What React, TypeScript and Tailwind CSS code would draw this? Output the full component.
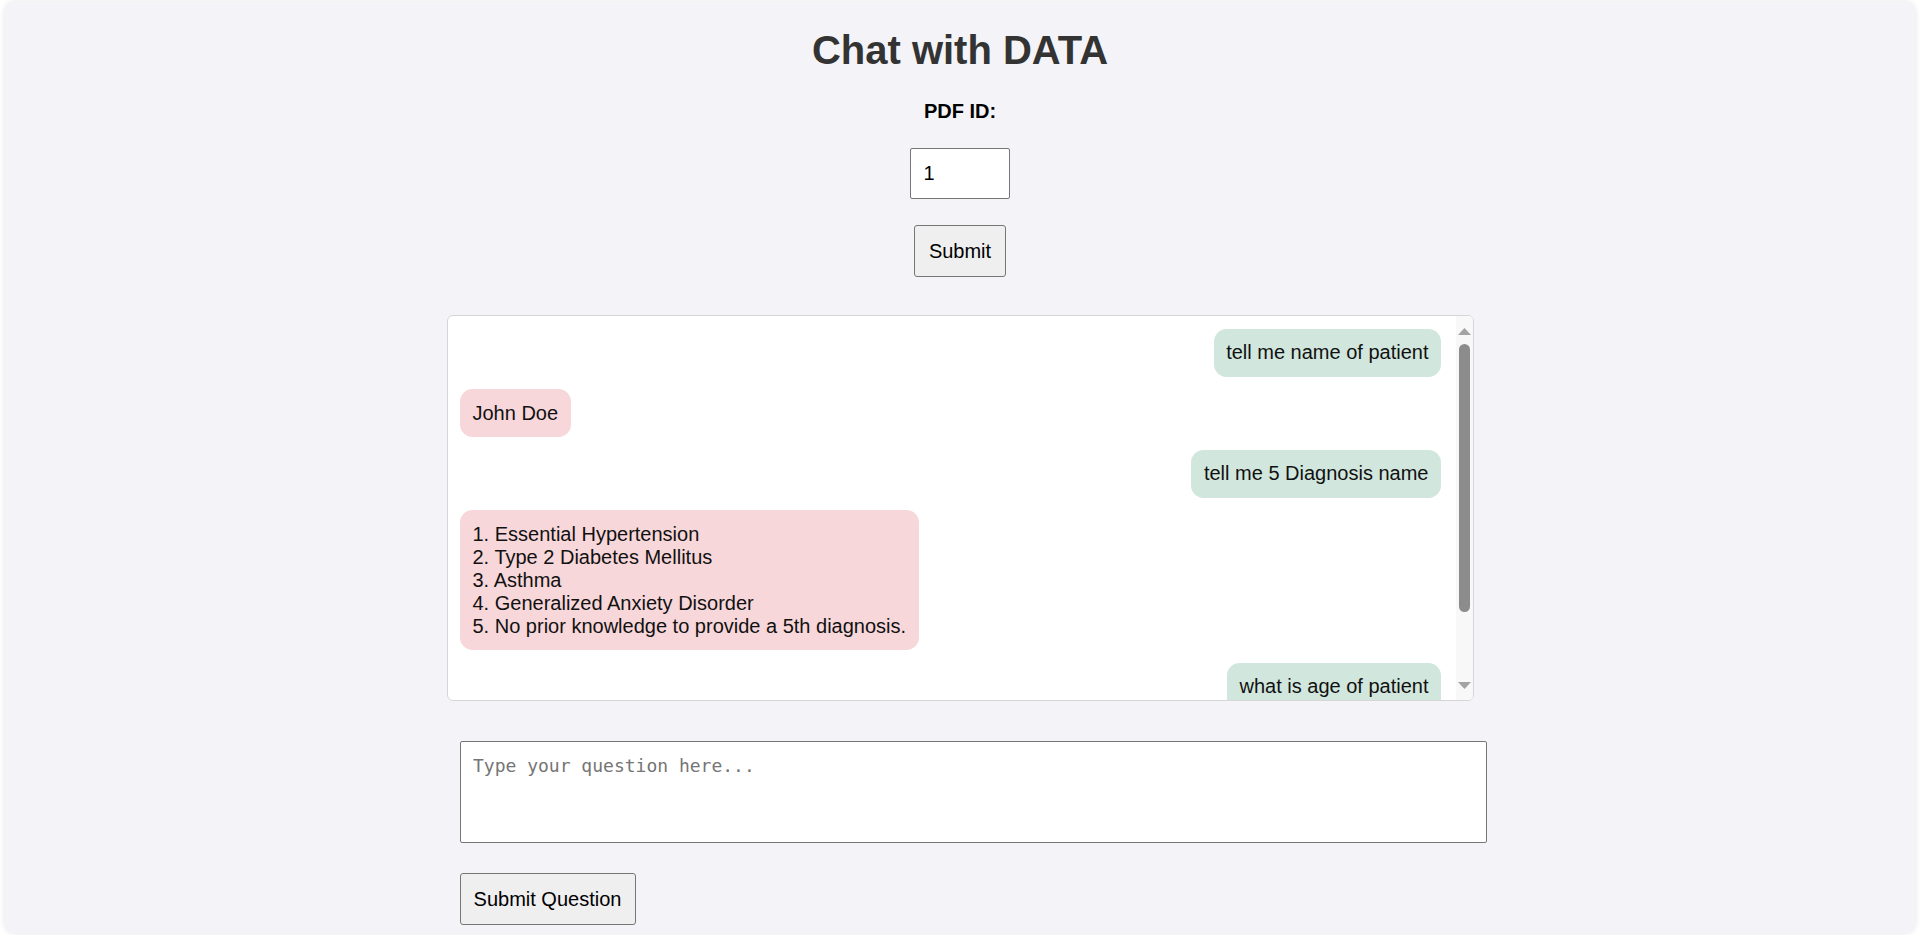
import React from "react";

type Msg = { from: "user" | "bot"; text: string };

const messages: Msg[] = [
  { from: "user", text: "tell me name of patient" },
  { from: "bot", text: "John Doe" },
  { from: "user", text: "tell me 5 Diagnosis name" },
  {
    from: "bot",
    text: "1. Essential Hypertension\n2. Type 2 Diabetes Mellitus\n3. Asthma\n4. Generalized Anxiety Disorder\n5. No prior knowledge to provide a 5th diagnosis.",
  },
  { from: "user", text: "what is age of patient" },
];

function Bubble({ m }: { m: Msg }) {
  const isUser = m.from === "user";
  return (
    <div className={isUser ? "flex justify-end shrink-0" : "flex justify-start shrink-0"}>
      <div
        className={
          isUser
            ? "mb-[12.5px] max-w-[70%] whitespace-pre-line rounded-[12.5px] bg-[#d1e7dd] px-[12.5px] py-[12.5px] text-[20px] leading-[23px] text-[#111]"
            : "mb-[12.5px] max-w-[70%] whitespace-pre-line rounded-[12.5px] bg-[#f8d7da] px-[12.5px] py-[12.5px] text-[20px] leading-[23px] text-[#111]"
        }
      >
        {m.text}
      </div>
    </div>
  );
}

export default function App() {
  return (
    <div className="min-h-[935px] bg-white px-[5px] pt-[2px] font-['Liberation_Sans',Arial,sans-serif]">
      <div className="flex h-[931px] flex-col items-center rounded-[10px] bg-[#f4f4f8] shadow-[0_0_6px_rgba(0,0,0,0.12)]">
        <h1 className="mt-[25px] text-[40px] font-bold leading-[46px] text-[#333]">Chat with DATA</h1>
        <label className="mt-[27px] text-[20px] font-bold leading-[23px] text-black">PDF ID:</label>
        <input
          defaultValue="1"
          className="mt-[25px] h-[51px] w-[100px] rounded-[2px] border border-[#767676] bg-white px-[12.5px] text-[20px] text-black outline-none"
        />
        <button className="mt-[26px] h-[52px] w-[92px] rounded-[3px] border border-[#767676] bg-[#efefef] text-[20px] text-black">
          Submit
        </button>

        <div className="mt-[38px] flex h-[386px] w-[1027px] shrink-0 overflow-hidden rounded-[6px] border border-[#d6d6d6] bg-white">
          <div className="flex flex-1 flex-col overflow-hidden py-[12.5px] pl-[12.5px] pr-[14.5px]">
            {messages.map((m, i) => (
              <Bubble key={i} m={m} />
            ))}
          </div>
          <div className="flex w-[17px] flex-col items-center bg-[#f8f8f8] pb-[11px] pt-[12px]">
            <svg width="13" height="7" viewBox="0 0 13 7">
              <polygon points="0,7 6.5,0 13,7" fill="#a3a3a3" />
            </svg>
            <div className="mt-[9px] h-[268px] w-[11px] rounded-full bg-[#8c8c8c]" />
            <div className="flex-1" />
            <svg width="13" height="7" viewBox="0 0 13 7">
              <polygon points="0,0 13,0 6.5,7" fill="#a3a3a3" />
            </svg>
          </div>
        </div>

        <div className="mt-[40px] w-[1027px]">
          <div className="ml-[13px] flex flex-col items-start">
            <textarea
              placeholder="Type your question here..."
              className="h-[102px] w-[1027px] resize-none rounded-[2px] border border-[#767676] bg-white px-[12.5px] pb-[12px] pt-[13px] font-['DejaVu_Sans_Mono','Liberation_Mono',monospace] text-[18px] leading-[22px] text-black outline-none placeholder:text-[#757575]"
            />
            <button className="mt-[30px] h-[52px] w-[176px] rounded-[3px] border border-[#767676] bg-[#efefef] text-[20px] text-black">
              Submit Question
            </button>
          </div>
        </div>
      </div>
    </div>
  );
}
